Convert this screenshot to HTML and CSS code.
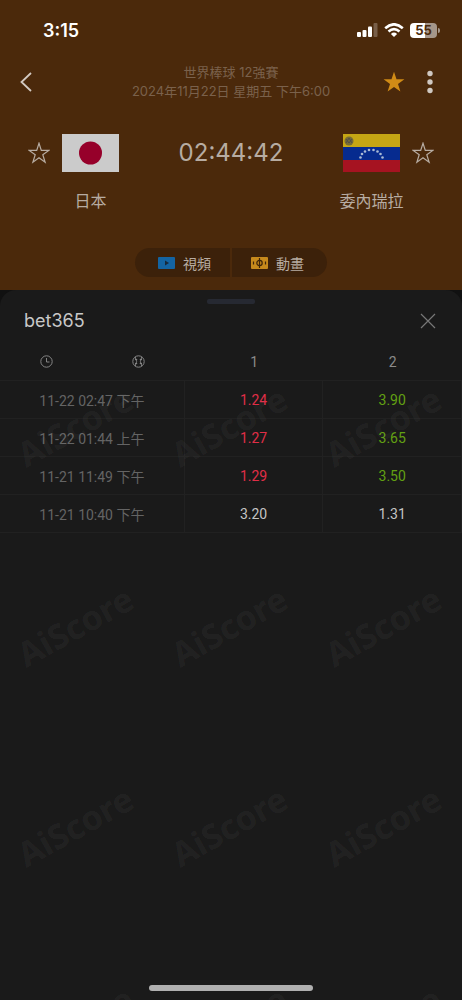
FILE: index.html
```html
<!DOCTYPE html>
<html lang="zh-Hant">
<head>
<meta charset="utf-8">
<meta name="viewport" content="width=device-width, initial-scale=1">
<title>AiScore</title>
<link rel="stylesheet" href="styles.css">
</head>
<body>
<div class="app">
  <header class="match">
    <div class="status">
      <span class="clock">3:15</span>
      <div class="indicators">
        <svg width="21" height="14" viewBox="0 0 21 14" fill="#fff" aria-hidden="true"><rect x="0" y="9" width="4" height="5" rx="1"/><rect x="5.500" y="7" width="4" height="7" rx="1"/><rect x="11" y="3.500" width="4" height="10.500" rx="1"/><rect x="16.500" y="0" width="4" height="14" rx="1" opacity=".25"/></svg>
        <svg width="20" height="14" viewBox="0 0 20 14" aria-hidden="true"><g fill="none" stroke="#fff" stroke-width="2.600"><path d="M1.200 5.200Q10-2.600 18.800 5.200"/><path d="M4.500 8.500Q10 3.600 15.500 8.500"/></g><path d="M10 14L6.900 10.900Q10 8.300 13.100 10.900Z" fill="#fff"/></svg>
        <span class="battery"><span class="battery-body">55</span><span class="battery-tip"></span></span>
      </div>
    </div>
    <div class="nav">
      <button class="icon-btn" aria-label="返回"><svg width="12" height="20" viewBox="0 0 12 20"><path d="M11 1L1.500 10L11 19" fill="none" stroke="#d3cac2" stroke-width="1.800"/></svg></button>
      <div class="event"><div>世界棒球 12強賽</div><div>2024年11月22日 星期五 下午6:00</div></div>
      <div class="nav-actions">
        <button class="icon-btn" aria-label="收藏"><svg width="22" height="22" viewBox="0 0 22 22"><path d="M11 .8L13.500 8.200H21.400L15 12.900L17.400 20.500L11 15.900L4.600 20.500L7 12.900L.6 8.200H8.500Z" fill="#d08b16"/></svg></button>
        <button class="icon-btn" aria-label="更多"><svg width="6" height="24" viewBox="0 0 6 24" fill="#cfc8c2"><circle cx="3" cy="3.500" r="2.700"/><circle cx="3" cy="12" r="2.700"/><circle cx="3" cy="20.500" r="2.700"/></svg></button>
      </div>
    </div>
    <div class="teams">
      <div class="team">
        <div class="team-row">
          <button class="icon-btn" aria-label="收藏日本"><svg width="22" height="22" viewBox="0 0 22 22"><path d="M11 1.200L13.300 8.400H20.800L14.800 12.800L17.100 20.200L11 15.700L4.900 20.200L7.200 12.800L1.200 8.400H8.700Z" fill="none" stroke="#b7aca2" stroke-width="1.200"/></svg></button>
          <svg class="flag" viewBox="0 0 57 38" role="img" aria-label="日本"><rect width="57" height="38" fill="#cbcbcb"/><circle cx="28.500" cy="19" r="11.500" fill="#96002a"/></svg>
        </div>
        <div class="name">日本</div>
      </div>
      <div class="score">02:44:42</div>
      <div class="team away">
        <div class="team-row">
          <svg class="flag" viewBox="0 0 57 38" role="img" aria-label="委內瑞拉"><rect width="57" height="13" fill="#c5a614"/><rect y="13" width="57" height="13" fill="#062b8f"/><rect y="26" width="57" height="12" fill="#a61321"/><circle cx="6" cy="7" r="4.500" fill="#766b36"/><path d="M3 5L6 9L9 5M3 9L6 4L9 9" fill="none" stroke="#514f49"/><g fill="#a9bad4"><circle cx="17.500" cy="23.500" r="1.300"/><circle cx="19" cy="20" r="1.300"/><circle cx="22" cy="17.500" r="1.300"/><circle cx="26" cy="16" r="1.300"/><circle cx="30.500" cy="16" r="1.300"/><circle cx="34.500" cy="17.500" r="1.300"/><circle cx="37.500" cy="20" r="1.300"/><circle cx="39.500" cy="23.500" r="1.300"/></g></svg>
          <button class="icon-btn" aria-label="收藏委內瑞拉"><svg width="22" height="22" viewBox="0 0 22 22"><path d="M11 1.200L13.300 8.400H20.800L14.800 12.800L17.100 20.200L11 15.700L4.900 20.200L7.200 12.800L1.200 8.400H8.700Z" fill="none" stroke="#b7aca2" stroke-width="1.200"/></svg></button>
        </div>
        <div class="name">委內瑞拉</div>
      </div>
    </div>
    <div class="media">
      <button class="media-btn"><svg width="17" height="12" viewBox="0 0 17 12" aria-hidden="true"><rect width="17" height="12" rx="1" fill="#1464a2"/><path d="M7 3.500L11 6L7 8.500Z" fill="#18293a"/></svg>視頻</button>
      <button class="media-btn"><svg width="17" height="12" viewBox="0 0 17 12" aria-hidden="true"><rect width="17" height="12" rx="1" fill="#c6891c"/><g fill="none" stroke="#3e2409" stroke-width="1.200"><circle cx="8.500" cy="6" r="2.700"/><path d="M8.500 1V11M2.500 4.500V7.500M14.500 4.500V7.500"/></g></svg>動畫</button>
    </div>
  </header>
  <main class="sheet">
    <div class="watermark" aria-hidden="true">
      <span>AiScore</span><span>AiScore</span><span>AiScore</span>
      <span>AiScore</span><span>AiScore</span><span>AiScore</span>
      <span>AiScore</span><span>AiScore</span><span>AiScore</span>
      <span>AiScore</span><span>AiScore</span><span>AiScore</span>
    </div>
    <div class="grabber"></div>
    <div class="sheet-head">
      <h1>bet365</h1>
      <button class="icon-btn" aria-label="關閉"><svg width="16" height="16" viewBox="0 0 16 16"><path d="M1 1L15 15M15 1L1 15" stroke="#777" stroke-width="1.200"/></svg></button>
    </div>
    <table class="odds">
      <colgroup><col class="c-half"><col class="c-half"><col class="c-odd"><col class="c-odd"></colgroup>
      <thead>
        <tr>
          <th aria-label="時間"><svg width="13" height="13" viewBox="0 0 13 13" fill="none" stroke="#858585"><circle cx="6.500" cy="6.500" r="5.700"/><path d="M6.500 3V7H9.500"/></svg></th>
          <th aria-label="比分"><svg width="13" height="13" viewBox="0 0 13 13" fill="none" stroke="#858585"><circle cx="6.500" cy="6.500" r="5.700"/><path d="M3.200 1.800Q6 6.500 3.200 11.200M9.800 1.800Q7 6.500 9.800 11.200M3 4.500H5.200M3 8.500H5.200M7.800 4.500H10M7.800 8.500H10"/></svg></th>
          <th>1</th><th>2</th>
        </tr>
      </thead>
      <tbody>
        <tr><td colspan="2" class="time">11-22 02:47 下午</td><td class="down">1.24</td><td class="up">3.90</td></tr>
        <tr><td colspan="2" class="time">11-22 01:44 上午</td><td class="down">1.27</td><td class="up">3.65</td></tr>
        <tr><td colspan="2" class="time">11-21 11:49 下午</td><td class="down">1.29</td><td class="up">3.50</td></tr>
        <tr><td colspan="2" class="time">11-21 10:40 下午</td><td>3.20</td><td>1.31</td></tr>
      </tbody>
    </table>
    <div class="home"></div>
  </main>
</div>
</body>
</html>
```
FILE: styles.css
```css
* { box-sizing: border-box; }

body {
  margin: 0;
  background: #111;
  font-family: Roboto, "Noto Sans CJK TC", sans-serif;
}

.app {
  display: flex;
  flex-direction: column;
  min-height: 100vh;
}

button {
  border: 0;
  padding: 0;
  background: none;
  color: inherit;
  font: inherit;
  cursor: pointer;
}

.icon-btn,
.icon-btn svg { display: block; }

.match {
  background: #4b290b;
  color: #b7aca2;
  font-family: Inter, "Noto Sans CJK TC", sans-serif;
  padding-bottom: 13px;
}

.status {
  display: flex;
  justify-content: space-between;
  align-items: center;
  height: 60px;
  padding: 0 22px 0 43px;
  color: #fff;
}

.clock {
  font-size: 18px;
  font-weight: 600;
}

.indicators {
  display: flex;
  align-items: center;
  gap: 6px;
}

.battery {
  display: flex;
  align-items: center;
  gap: 1px;
}

.battery-body {
  width: 27px;
  border-radius: 4px;
  background: linear-gradient(90deg, #fff 55%, #a5968a 55%);
  color: #4b290b;
  font-size: 13px;
  font-weight: 700;
  line-height: 15px;
  text-align: center;
}

.battery-tip {
  width: 2px;
  height: 5px;
  border-radius: 0 2px 2px 0;
  background: #a5968a;
}

.nav {
  display: grid;
  grid-template-columns: 64px 1fr 64px;
  align-items: center;
  height: 44px;
  padding: 0 20px;
}

.event {
  display: flex;
  flex-direction: column;
  align-items: center;
  color: #7a614c;
  font-size: 13px;
  line-height: 19px;
  white-space: nowrap;
}

.nav-actions {
  display: flex;
  justify-content: flex-end;
  align-items: center;
  gap: 22px;
  padding-right: 9px;
}

.teams {
  display: flex;
  justify-content: space-between;
  padding: 30px 28px 0;
}

.team-row {
  display: flex;
  align-items: center;
  gap: 12px;
}

.flag {
  width: 57px;
  height: 38px;
}

.name {
  width: 57px;
  margin: 17px 0 0 34px;
  font-size: 16px;
  line-height: 24px;
  white-space: nowrap;
  display: flex;
  justify-content: center;
}

.away .name { margin-left: 0; }

.score {
  font-size: 24px;
  line-height: 38px;
}

.media {
  display: flex;
  justify-content: center;
  gap: 2px;
  margin-top: 35px;
}

.media-btn {
  display: flex;
  align-items: center;
  justify-content: center;
  gap: 8px;
  width: 95px;
  height: 29px;
  background: #3c210a;
  font-size: 14px;
}

.media-btn:first-child {
  padding-left: 4px;
  border-radius: 15px 0 0 15px;
}

.media-btn:last-child {
  padding-right: 4px;
  border-radius: 0 15px 15px 0;
}

.sheet {
  position: relative;
  flex: 1;
  overflow: hidden;
  border-radius: 16px 16px 0 0;
  background: #1a1a1a;
  padding-top: 9px;
}

.watermark {
  position: absolute;
  inset: 36px 0 0;
  display: grid;
  grid-template-columns: repeat(3, 1fr);
  grid-auto-rows: 200px;
  place-items: center;
  overflow: hidden;
  color: rgba(255, 255, 255, 0.05);
  font: 700 34px "Noto Sans", sans-serif;
  pointer-events: none;
}

.watermark span {
  margin-right: 4px;
  transform: rotate(-29deg);
}

.grabber {
  width: 48px;
  height: 5px;
  margin: 0 auto;
  border-radius: 2px;
  background: #262932;
}

.sheet-head {
  display: flex;
  justify-content: space-between;
  align-items: center;
  height: 33px;
  margin-bottom: 6px;
  padding: 0 26px 0 24px;
}

h1 {
  margin: 0;
  color: #c8c8c8;
  font-size: 18px;
  font-weight: 400;
  font-family: Inter, sans-serif;
}

.odds {
  width: 100%;
  table-layout: fixed;
  border-collapse: separate;
  border-spacing: 0;
  color: #c4c4c4;
  font-size: 14px;
}

.c-half { width: 20%; }
.c-odd { width: 30%; }

.odds th,
.odds td {
  height: 38px;
  padding: 0;
  border-bottom: 1px solid #212121;
  font-weight: 400;
  text-align: center;
  vertical-align: middle;
}

.odds th { color: #8a8a8a; }
.odds th svg { display: block; margin: 0 auto; }
.odds td { border-right: 1px solid #212121; }
.odds .time { color: #646464; }
.odds .down { color: #e02e47; }
.odds .up { color: #62a012; }

.home {
  position: absolute;
  left: 50%;
  bottom: 9px;
  width: 164px;
  height: 6px;
  margin-left: -82px;
  border-radius: 3px;
  background: #b0b0b0;
}
```
